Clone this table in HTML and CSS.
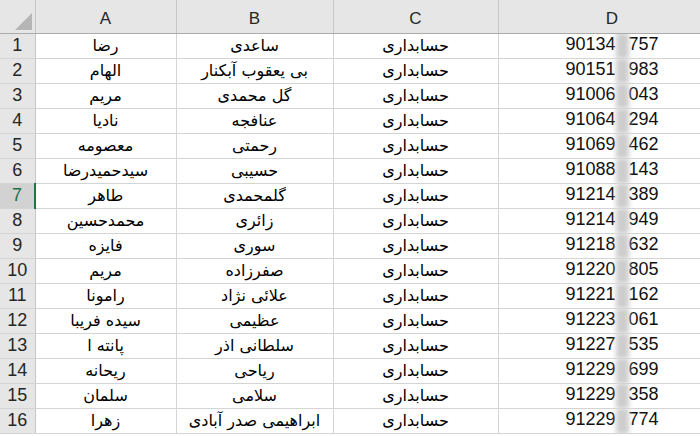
FILE: index.html
```html
<!DOCTYPE html>
<html>
<head>
<meta charset="utf-8">
<link rel="stylesheet" href="styles.css">
</head>
<body>
<table class="sheet">
  <colgroup>
    <col class="c-rh"><col class="c-a"><col class="c-b"><col class="c-c"><col class="c-d">
  </colgroup>
  <thead>
    <tr>
      <th class="corner"><span class="tri"></span></th>
      <th>A</th><th>B</th><th>C</th><th>D</th>
    </tr>
  </thead>
  <tbody>
    <tr><th>1</th><td dir="rtl">رضا</td><td dir="rtl">ساعدی</td><td dir="rtl">حسابداری</td><td class="num">90134<span class="blur"></span>757</td></tr>
    <tr><th>2</th><td dir="rtl">الهام</td><td dir="rtl">بی یعقوب آبکنار</td><td dir="rtl">حسابداری</td><td class="num">90151<span class="blur"></span>983</td></tr>
    <tr><th>3</th><td dir="rtl">مریم</td><td dir="rtl">گل محمدی</td><td dir="rtl">حسابداری</td><td class="num">91006<span class="blur"></span>043</td></tr>
    <tr><th>4</th><td dir="rtl">نادیا</td><td dir="rtl">عنافجه</td><td dir="rtl">حسابداری</td><td class="num">91064<span class="blur"></span>294</td></tr>
    <tr><th>5</th><td dir="rtl">معصومه</td><td dir="rtl">رحمتی</td><td dir="rtl">حسابداری</td><td class="num">91069<span class="blur"></span>462</td></tr>
    <tr><th>6</th><td dir="rtl">سیدحمیدرضا</td><td dir="rtl">حسیبی</td><td dir="rtl">حسابداری</td><td class="num">91088<span class="blur"></span>143</td></tr>
    <tr class="sel"><th>7</th><td dir="rtl">طاهر</td><td dir="rtl">گلمحمدی</td><td dir="rtl">حسابداری</td><td class="num">91214<span class="blur"></span>389</td></tr>
    <tr><th>8</th><td dir="rtl">محمدحسین</td><td dir="rtl">زائری</td><td dir="rtl">حسابداری</td><td class="num">91214<span class="blur"></span>949</td></tr>
    <tr><th>9</th><td dir="rtl">فایزه</td><td dir="rtl">سوری</td><td dir="rtl">حسابداری</td><td class="num">91218<span class="blur"></span>632</td></tr>
    <tr><th>10</th><td dir="rtl">مریم</td><td dir="rtl">صفرزاده</td><td dir="rtl">حسابداری</td><td class="num">91220<span class="blur"></span>805</td></tr>
    <tr><th>11</th><td dir="rtl">رامونا</td><td dir="rtl">علائی نژاد</td><td dir="rtl">حسابداری</td><td class="num">91221<span class="blur"></span>162</td></tr>
    <tr><th>12</th><td dir="rtl">سیده فریبا</td><td dir="rtl">عظیمی</td><td dir="rtl">حسابداری</td><td class="num">91223<span class="blur"></span>061</td></tr>
    <tr><th>13</th><td dir="rtl">پانته ا</td><td dir="rtl">سلطانی اذر</td><td dir="rtl">حسابداری</td><td class="num">91227<span class="blur"></span>535</td></tr>
    <tr><th>14</th><td dir="rtl">ریحانه</td><td dir="rtl">ریاحی</td><td dir="rtl">حسابداری</td><td class="num">91229<span class="blur"></span>699</td></tr>
    <tr><th>15</th><td dir="rtl">سلمان</td><td dir="rtl">سلامی</td><td dir="rtl">حسابداری</td><td class="num">91229<span class="blur"></span>358</td></tr>
    <tr><th>16</th><td dir="rtl">زهرا</td><td dir="rtl">ابراهیمی صدر آبادی</td><td dir="rtl">حسابداری</td><td class="num">91229<span class="blur"></span>774</td></tr>
  </tbody>
</table>
</body>
</html>
```
FILE: styles.css
```css
html, body {
  margin: 0;
  padding: 0;
  background: #ffffff;
  overflow: hidden;
}
.sheet {
  border-collapse: collapse;
  table-layout: fixed;
  width: 726px;
  font-family: "Liberation Sans", "DejaVu Sans", sans-serif;
  font-size: 18px;
  color: #000;
}
.c-rh { width: 35px; }
.c-a { width: 141px; }
.c-b { width: 157px; }
.c-c { width: 165px; }
.c-d { width: 228px; }

.sheet th, .sheet td {
  padding: 0;
  text-align: center;
  white-space: nowrap;
  overflow: hidden;
}
.sheet thead th {
  height: 33px;
  background: #e6e6e6;
  border-right: 1px solid #c6c6c6;
  border-bottom: 1px solid #ababab;
  font-weight: normal;
  color: #262626;
  font-size: 17px;
  vertical-align: bottom;
  padding-bottom: 4px;
  box-sizing: border-box;
}
.sheet thead th.corner {
  position: relative;
}
.tri {
  position: absolute;
  right: 3px;
  bottom: 3px;
  width: 0;
  height: 0;
  border-left: 17px solid transparent;
  border-bottom: 17px solid #b5b5b5;
}
.sheet tbody th {
  height: 24px;
  background: #e6e6e6;
  border-right: 1px solid #c6c6c6;
  border-bottom: 1px solid #d4d4d4;
  font-weight: normal;
  color: #262626;
  font-size: 18px;
}
.sheet tbody tr.sel th {
  background: #d2d2d2;
  color: #217346;
  border-right: 2px solid #217346;
}
.sheet td {
  height: 24px;
  border-right: 1px solid #d4d4d4;
  border-bottom: 1px solid #d4d4d4;
  font-family: "DejaVu Sans", sans-serif;
  font-size: 16px;
}
.sheet td.num {
  font-family: "Liberation Sans", sans-serif;
  font-size: 18px;
  color: #111;
}
.blur {
  display: inline-block;
  width: 13px;
  height: 26px;
  margin: -2px 0;
  vertical-align: middle;
  background: #cdcdcd;
  filter: blur(2.5px);
}
```
